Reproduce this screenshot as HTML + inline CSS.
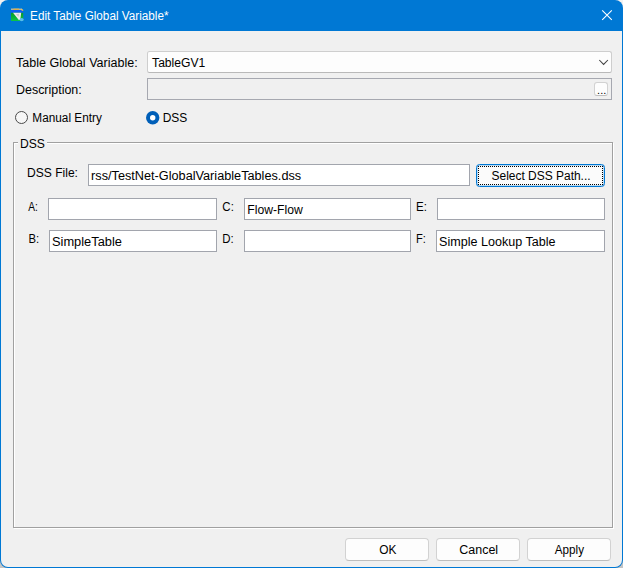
<!DOCTYPE html>
<html><head><meta charset="utf-8"><title>Edit Table Global Variable</title>
<style>
html,body{margin:0;padding:0;}
body{width:623px;height:568px;overflow:hidden;background:#fff;font-family:"Liberation Sans",sans-serif;font-size:12.5px;color:#000;position:relative;}
.a{position:absolute;box-sizing:border-box;}
.t{position:absolute;white-space:nowrap;line-height:16px;transform-origin:0 0;}
.tf{position:absolute;box-sizing:border-box;background:#fff;border:1px solid #a2a5ad;}
.btn{position:absolute;box-sizing:border-box;background:#fdfdfd;border:1px solid #d2d2d2;border-bottom-color:#bdbdbd;border-radius:4px;}
</style></head><body>
<div class="a" style="left:0;top:0;width:623px;height:568px;background:linear-gradient(#f1f1f1 0,#f1f1f1 50%,#c4c4c4 50%,#c4c4c4 100%);"></div>
<div class="a" style="left:0;top:0;width:623px;height:568px;border-radius:8px;background:#0078d4;"></div>
<div class="a" style="left:1px;top:31px;width:621px;height:536px;background:#f0f0f0;border-radius:0 0 7px 7px;"></div>
<svg class="a" style="left:0;top:0" width="40" height="31" viewBox="0 0 40 31">
<defs><linearGradient id="g" x1="0" y1="0" x2="0" y2="1"><stop offset="0" stop-color="#0a9a26"/><stop offset="1" stop-color="#0cc648"/></linearGradient></defs>
<rect x="11" y="8.6" width="11" height="1.3" fill="#d9c89a"/>
<rect x="13.5" y="8.7" width="5.5" height="1.2" fill="#f9b62e"/>
<rect x="11" y="9.9" width="12" height="3" fill="#0f5ff0"/>
<path d="M21 8.8 L23 9.6 L23.3 11 L21.5 10.5 Z" fill="#f2c350"/>
<rect x="11" y="12.8" width="12.2" height="8.2" fill="url(#g)"/>
<polygon points="13,12.8 21.2,12.8 20.7,16.5 20.3,19.6 19,20.2" fill="#ececec"/>
<polygon points="16,14.2 19,13.8 18.6,16.8" fill="#c9c9c9"/>
<ellipse cx="21.7" cy="19.6" rx="2" ry="1.6" fill="#58b9f2"/>
</svg>
<svg class="a" style="left:596px;top:4px" width="22" height="22" viewBox="0 0 22 22"><path d="M6.2 6.3 L15.8 15.8 M15.8 6.3 L6.2 15.8" stroke="#fff" stroke-width="1.1" fill="none"/></svg>
<div class="a" style="left:147px;top:51px;width:465px;height:22px;background:#fdfdfd;border:1px solid #cecece;border-bottom-color:#b9b9b9;border-radius:2.5px;"></div>
<svg class="a" style="left:596px;top:56px" width="16" height="12" viewBox="0 0 16 12"><path d="M3.3 4 L7.6 8.4 L11.9 4" stroke="#404040" stroke-width="1.05" fill="none"/></svg>
<div class="tf" style="left:147px;top:78px;width:465px;height:22px;background:#f0f0f0;border-color:#a6a8b0;"></div>
<div class="btn" style="left:594px;top:82px;width:14px;height:14px;border-radius:3px;"></div>
<div class="t" style="left:597.1px;top:82px;font-size:11px;">...</div>
<div class="a" style="left:15px;top:111px;width:13px;height:13px;border:1px solid #4a4a4a;border-radius:50%;background:#f6f6f6;"></div>
<svg class="a" style="left:144px;top:109px" width="18" height="18" viewBox="0 0 18 18"><circle cx="8.7" cy="8.7" r="6.7" fill="#005fb8"/><circle cx="8.7" cy="8.7" r="2.7" fill="#fff"/></svg>
<div class="a" style="left:14px;top:143px;width:600px;height:386px;border:1px solid #fff;"></div>
<div class="a" style="left:13px;top:142px;width:600px;height:386px;border:1px solid #a0a0a0;"></div>
<div class="a" style="left:18px;top:140px;width:29px;height:6px;background:#f0f0f0;"></div>
<div class="tf" style="left:88px;top:164px;width:382px;height:22px;"></div>
<div class="tf" style="left:48px;top:198px;width:169px;height:22px;"></div>
<div class="tf" style="left:244px;top:198px;width:167px;height:22px;"></div>
<div class="tf" style="left:437px;top:198px;width:168px;height:22px;"></div>
<div class="tf" style="left:49px;top:230px;width:168px;height:22px;"></div>
<div class="tf" style="left:244px;top:230px;width:167px;height:22px;"></div>
<div class="tf" style="left:436px;top:230px;width:169px;height:22px;"></div>
<div class="a" style="left:476px;top:164px;width:129px;height:23px;background:#fbfbfb;border:1px solid #0078d4;border-radius:3.5px;box-shadow:inset 0 0 0 0.25px #0078d4;"></div>
<svg class="a" style="left:478px;top:166px" width="125" height="19" viewBox="0 0 125 19"><g stroke="#000" stroke-width="1" stroke-dasharray="1 1" shape-rendering="crispEdges"><path d="M0 0.5 H125"/><path d="M0 18.5 H125"/><path d="M0.5 0 V19"/><path d="M124.5 0 V19"/></g></svg>
<div class="btn" style="left:345px;top:538px;width:84px;height:23px;"></div>
<div class="btn" style="left:436px;top:538px;width:84px;height:23px;"></div>
<div class="btn" style="left:527px;top:538px;width:84px;height:23px;"></div>
<div class="t" style="left:30px;top:8px;font-size:12px;color:#fff;transform:translateX(0.12px) scaleX(0.9767);">Edit Table Global Variable*</div>
<div class="t" style="left:16px;top:55px;font-size:12.5px;color:#000;transform:translateX(0.05px) scaleX(1.0017);">Table Global Variable:</div>
<div class="t" style="left:152px;top:55px;font-size:12.5px;color:#000;transform:translateX(0.06px) scaleX(0.9704);">TableGV1</div>
<div class="t" style="left:16px;top:82px;font-size:12.5px;color:#000;transform:translateX(0.00px) scaleX(0.9957);">Description:</div>
<div class="t" style="left:32px;top:110px;font-size:12.5px;color:#000;transform:translateX(0.36px) scaleX(0.9432);">Manual Entry</div>
<div class="t" style="left:162px;top:110px;font-size:12.5px;color:#000;transform:translateX(0.64px) scaleX(0.9575);">DSS</div>
<div class="t" style="left:19px;top:136px;font-size:12.5px;color:#000;transform:translateX(0.93px) scaleX(0.9699);">DSS</div>
<div class="t" style="left:27px;top:165px;font-size:12.5px;color:#000;transform:translateX(0.04px) scaleX(0.9640);">DSS File:</div>
<div class="t" style="left:91px;top:168px;font-size:12.5px;color:#000;transform:translateX(0.11px) scaleX(1.0156);">rss/TestNet-GlobalVariableTables.dss</div>
<div class="t" style="left:491px;top:168px;font-size:12.5px;color:#000;transform:translateX(0.50px) scaleX(0.9572);">Select DSS Path...</div>
<div class="t" style="left:28px;top:199px;font-size:12.5px;color:#000;transform:translateX(0.20px) scaleX(0.8100);">A:</div>
<div class="t" style="left:222px;top:199px;font-size:12.5px;color:#000;transform:translateX(0.36px) scaleX(0.9180);">C:</div>
<div class="t" style="left:416px;top:199px;font-size:12.5px;color:#000;transform:translateX(0.05px) scaleX(0.9240);">E:</div>
<div class="t" style="left:247px;top:202px;font-size:12.5px;color:#000;transform:translateX(0.33px) scaleX(0.9750);">Flow-Flow</div>
<div class="t" style="left:28px;top:231px;font-size:12.5px;color:#000;transform:translateX(0.40px) scaleX(0.9000);">B:</div>
<div class="t" style="left:222px;top:231px;font-size:12.5px;color:#000;transform:translateX(0.19px) scaleX(0.9180);">D:</div>
<div class="t" style="left:415px;top:231px;font-size:12.5px;color:#000;transform:translateX(0.99px) scaleX(0.8890);">F:</div>
<div class="t" style="left:51px;top:234px;font-size:12.5px;color:#000;transform:translateX(0.96px) scaleX(1.0273);">SimpleTable</div>
<div class="t" style="left:439px;top:234px;font-size:12.5px;color:#000;transform:translateX(0.07px) scaleX(1.0050);">Simple Lookup Table</div>
<div class="t" style="left:379px;top:542px;font-size:12.5px;color:#000;transform:translateX(0.16px) scaleX(0.9507);">OK</div>
<div class="t" style="left:459px;top:542px;font-size:12.5px;color:#000;transform:translateX(0.28px) scaleX(0.9973);">Cancel</div>
<div class="t" style="left:554px;top:542px;font-size:12.5px;color:#000;transform:translateX(0.80px) scaleX(0.9344);">Apply</div>
</body></html>
